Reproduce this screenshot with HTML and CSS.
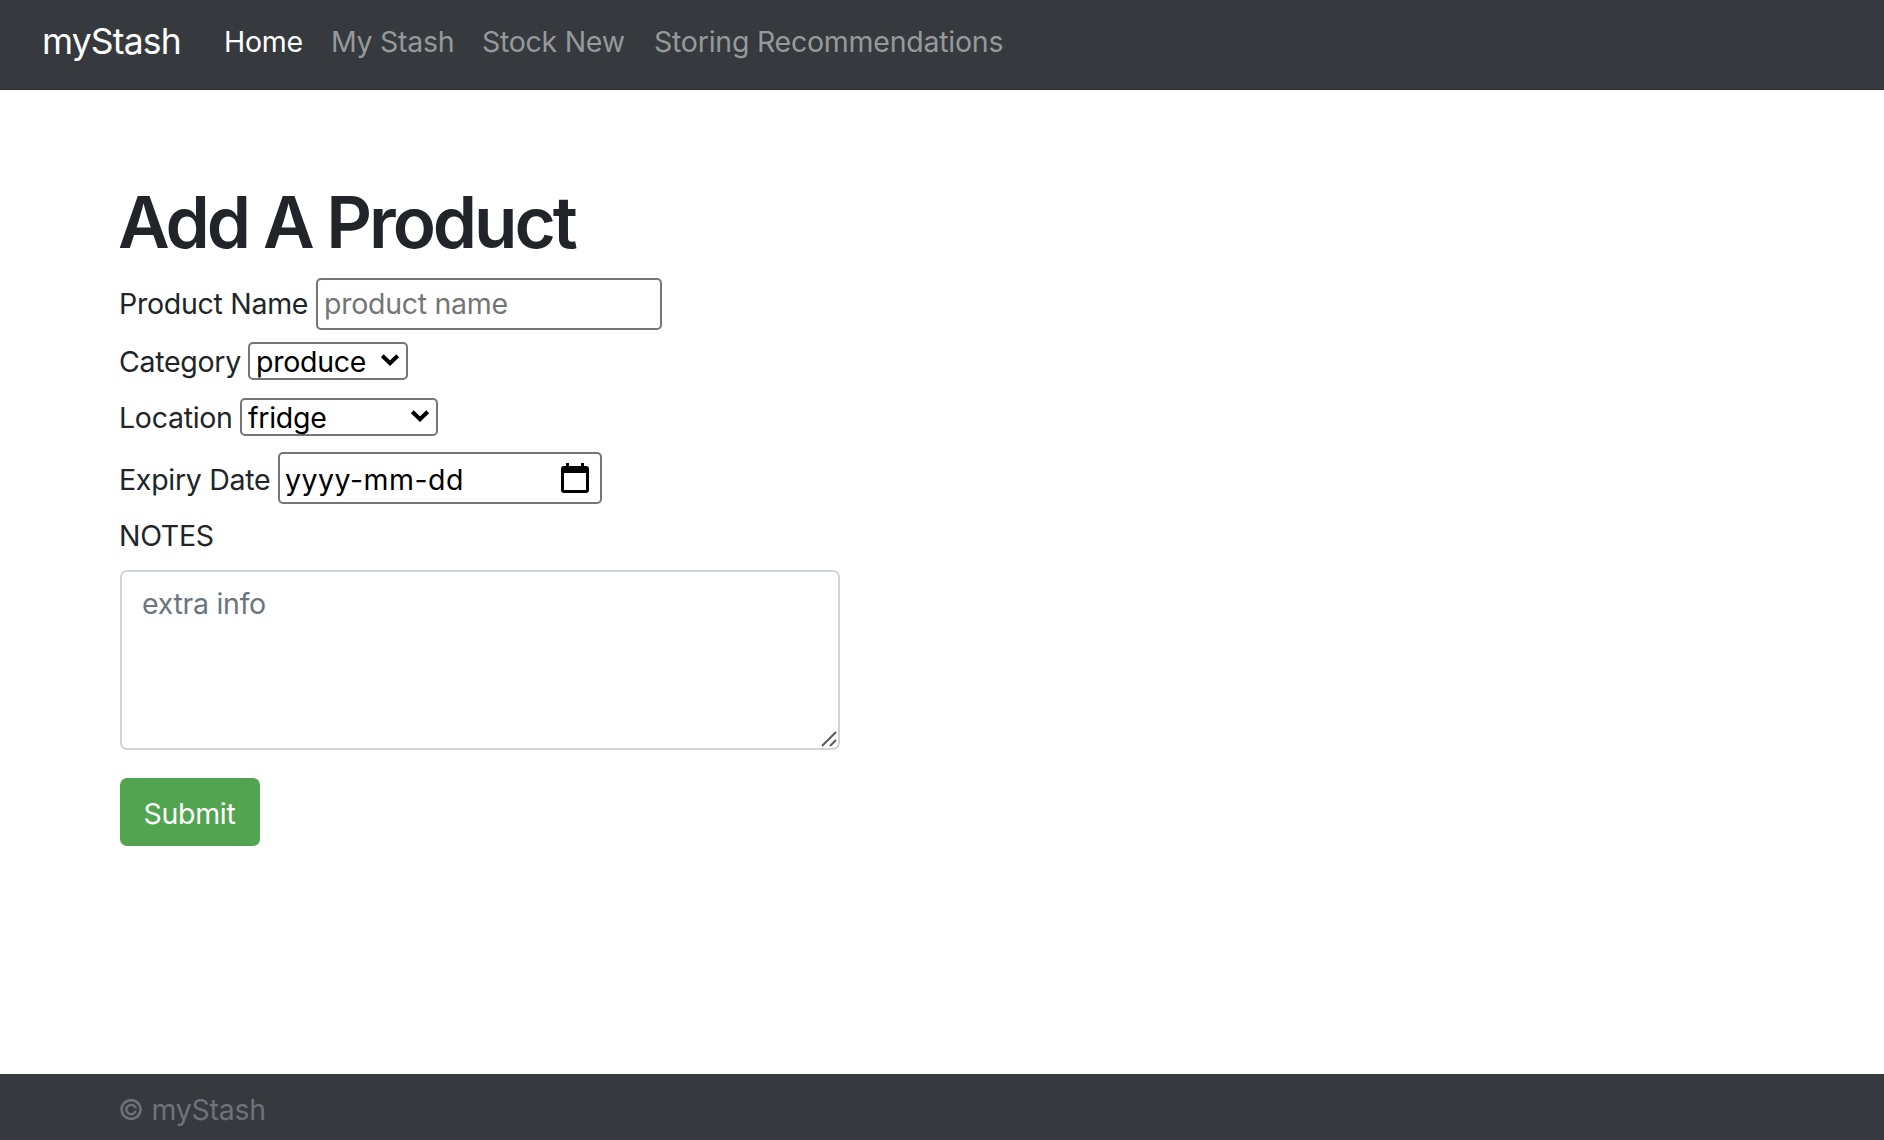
FILE: index.html
```html
<!DOCTYPE html>
<html lang="en">
<head>
<meta charset="utf-8">
<title>myStash</title>
<link rel="stylesheet" href="styles.css">
</head>
<body>
<nav class="navbar">
  <a class="brand"><span>myStash</span></a>
  <a class="link active"><span>Home</span></a>
  <a class="link my-stash"><span>My Stash</span></a>
  <a class="link stock"><span>Stock New</span></a>
  <a class="link storing"><span>Storing Recommendations</span></a>
</nav>
<main class="content">
  <h1 class="title">Add A Product</h1>
  <form class="form">
    <div class="row row-name">
      <label class="label" for="name">Product Name</label>
      <input class="control name" id="name" type="text" placeholder="product name">
    </div>
    <div class="row row-category">
      <span class="label">Category</span>
      <div class="control select category"><span>produce</span>
        <svg class="chevron" viewBox="0 0 18 12"><path d="M1.300 1.700 9 9.200 16.700 1.700" fill="none" stroke="#000" stroke-width="4"/></svg>
      </div>
    </div>
    <div class="row row-location">
      <span class="label">Location</span>
      <div class="control select location"><span>fridge</span>
        <svg class="chevron" viewBox="0 0 18 12"><path d="M1.300 1.700 9 9.200 16.700 1.700" fill="none" stroke="#000" stroke-width="4"/></svg>
      </div>
    </div>
    <div class="row row-date">
      <span class="label">Expiry Date</span>
      <div class="control date"><span>yyyy-mm-dd</span>
        <svg class="calendar" viewBox="0 0 28 30"><path d="M5 0h3v3h12V0h3v3h2a3 3 0 0 1 3 3v21a3 3 0 0 1-3 3H3a3 3 0 0 1-3-3V6a3 3 0 0 1 3-3h2zM3 10v17h22V10z" fill="#000" fill-rule="evenodd"/></svg>
      </div>
    </div>
    <label class="label notes-label" for="notes">NOTES</label>
    <div class="notes-box">
      <textarea class="notes" id="notes" placeholder="extra info"></textarea>
      <svg class="grip" viewBox="0 0 16 16"><path d="M1 15 15 1M9 15 15 9" fill="none" stroke="#555" stroke-width="1.8"/></svg>
    </div>
    <button class="submit" type="button">Submit</button>
  </form>
</main>
<footer class="footer"><span>© myStash</span></footer>
</body>
</html>
```
FILE: styles.css
```css
* { box-sizing: border-box; }
body {
  margin: 0;
  height: 1140px;
  display: flex;
  flex-direction: column;
  overflow: hidden;
  background: #fff;
  color: #212529;
  font-family: Inter, "Liberation Sans", sans-serif;
  font-size: 28.5px;
  letter-spacing: -0.28px;
  line-height: 40px;
}
.navbar {
  height: 90px;
  flex: none;
  display: flex;
  align-items: center;
  padding: 0 0 6px 42px;
  background: #363a3e;
  border-bottom: 1px solid #2e3135;
  white-space: nowrap;
}
.brand { width: 182px; color: #fff; font-size: 35.5px; letter-spacing: -0.85px; }
.link { color: #96999b; }
.active { width: 107px; color: #fff; }
.my-stash { width: 151px; }
.stock { width: 172px; }
.storing { letter-spacing: -0.24px; }
.content { flex: 1; padding: 94px 0 0 119px; }
.title {
  margin: 0 0 0 -1px;
  height: 84px;
  font-size: 71px;
  font-weight: 600;
  line-height: 77px;
  letter-spacing: -3.05px;
  white-space: nowrap;
}
.form { display: flex; flex-direction: column; align-items: flex-start; }
.row { display: flex; align-items: center; white-space: nowrap; }
.control {
  border: 2px solid #767676;
  border-radius: 5px;
  background: #fff;
  color: #000;
  font: inherit;
  letter-spacing: inherit;
  display: flex;
  align-items: center;
  justify-content: space-between;
}
.control::placeholder { color: #757575; opacity: 1; }
.row-name { height: 52px; margin-top: 10px; }
.row-name .label { width: 197px; }
.name { width: 346px; height: 52px; padding: 0 6px 1px; outline: 0; }
.row-category { height: 38px; margin-top: 12px; }
.row-category .label { width: 129px; padding-top: 2px; }
.select { height: 38px; padding: 1px 7px 0 6px; }
.category { width: 160px; }
.row-location { height: 38px; margin-top: 18px; }
.row-location .label { width: 121px; padding-top: 2px; }
.location { width: 198px; padding-left: 6px; }
.chevron { width: 18px; height: 12px; margin-top: -3px; overflow: visible; }
.row-date { height: 52px; margin-top: 16px; }
.row-date .label { width: 159px; padding-top: 3px; }
.date { width: 324px; height: 52px; padding: 3px 11px 0 5px; letter-spacing: 0.5px; }
.calendar { width: 28px; height: 30px; margin-top: -3px; }
.notes-label { margin-top: 12px; height: 54px; }
.notes-box { position: relative; width: 720px; height: 180px; margin-left: 1px; }
.notes {
  display: block;
  width: 100%;
  height: 100%;
  padding: 12px 20px;
  border: 2px solid #ced4da;
  border-radius: 7px;
  resize: none;
  font: inherit;
  letter-spacing: inherit;
}
.notes::placeholder { color: #6c757d; opacity: 1; }
.grip { position: absolute; right: 3px; bottom: 3px; width: 16px; height: 16px; }
.submit {
  width: 140px;
  height: 68px;
  margin: 28px 0 0 1px;
  padding: 4px 1px 0 0;
  border: 0;
  border-radius: 7px;
  background: #53a451;
  color: #fff;
  font: inherit;
  letter-spacing: inherit;
}
.footer {
  height: 66px;
  flex: none;
  padding: 16px 0 0 118px;
  background: #363a3e;
  color: #6e727b;
}
```
